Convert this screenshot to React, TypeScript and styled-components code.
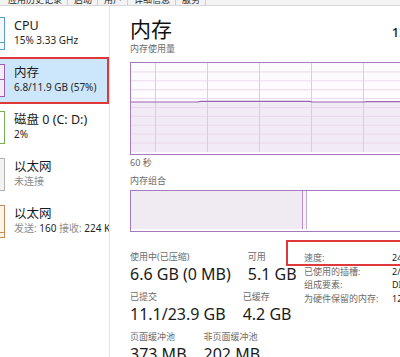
import React from "react";
import styled, { createGlobalStyle } from "styled-components";

const GlobalStyle = createGlobalStyle`
  html, body { margin: 0; padding: 0; background: #ffffff; overflow: hidden; }
  body { font-family: "Noto Sans", "Noto Sans CJK SC", sans-serif; color: #1b1b1b; }
  #root { width: 400px; height: 357px; }
`;

const Window = styled.div`
  width: 400px;
  height: 357px;
  overflow: hidden;
  display: flex;
  flex-direction: column;
  background: #ffffff;
`;

const TabStrip = styled.div`
  height: 5px;
  flex: none;
  display: flex;
  align-items: flex-end;
  overflow: hidden;
  background: #f3f3f3;
  border-bottom: 1px solid #d8d8d8;
  padding-left: 8px;
`;

const Tab = styled.div`
  font-family: "Noto Sans CJK SC", sans-serif;
  font-size: 9px;
  line-height: 10px;
  color: #262626;
  padding-right: 5px;
  margin-right: 6px;
  border-right: 1px solid #cfcfcf;
  white-space: nowrap;
`;

const Body = styled.div`
  flex: 1;
  display: flex;
  min-height: 0;
`;

const Sidebar = styled.nav`
  flex: none;
  width: 109px;
  border-right: 1px solid #e4e4e4;
  padding-top: 4px;
  display: flex;
  flex-direction: column;
  overflow: hidden;
`;

const Item = styled.div<{ $selected?: boolean }>`
  position: relative;
  height: 47px;
  flex: none;
  display: flex;
  gap: 9px;
  background: ${(p) => (p.$selected ? "#cce7fb" : "transparent")};
`;

const Annotation = styled.span<{ $top: number; $left: number; $right: number; $bottom: number }>`
  position: absolute;
  top: ${(p) => p.$top}px;
  left: ${(p) => p.$left}px;
  right: ${(p) => p.$right}px;
  bottom: ${(p) => p.$bottom}px;
  border: 2px solid #e0383a;
  pointer-events: none;
`;

const Thumb = styled.div<{ $color: string; $bg: string }>`
  flex: none;
  width: 4px;
  height: 31px;
  margin-top: 7px;
  border: 1px solid ${(p) => p.$color};
  border-left: none;
  background: ${(p) => p.$bg};
  display: flex;
  flex-direction: column;
  justify-content: flex-end;
`;

const ThumbFill = styled.div<{ $color: string }>`
  border-top: 1px solid ${(p) => p.$color};
`;

const ItemText = styled.div`
  padding-top: 8px;
  min-width: 0;
  white-space: nowrap;
`;

const ItemTitle = styled.div`
  font-size: 12.5px;
  line-height: 15px;
  color: #1a1a1a;
`;

const ItemSub = styled.div`
  font-size: 10px;
  line-height: 14px;
  color: #262626;
`;

const Muted = styled.span`
  color: #8c8c8c;
`;

const Main = styled.main`
  flex: none;
  width: 309px;
  padding: 11px 0 0 20px;
  display: flex;
  flex-direction: column;
`;

const Header = styled.div`
  display: flex;
  justify-content: space-between;
  align-items: baseline;
  height: 24px;
`;

const Title = styled.h1`
  margin: 0;
  font-size: 21px;
  line-height: 24px;
  font-weight: 400;
  color: #111111;
`;

const Total = styled.div`
  font-size: 13px;
  font-weight: 500;
  color: #1a1a1a;
`;

const ChartLabel = styled.div<{ $mt: number }>`
  margin-top: ${(p) => p.$mt}px;
  font-size: 9px;
  line-height: 12px;
  color: #6a6a6a;
`;

const Chart = styled.div<{ $h: number; $mt: number }>`
  flex: none;
  margin-top: ${(p) => p.$mt}px;
  height: ${(p) => p.$h}px;
  border: 1px solid #a67bbd;
  background: #fdfbfd;
  svg { display: block; }
`;

const Stats = styled.div`
  display: flex;
  margin-top: 19px;
`;

const StatsLeft = styled.div`
  flex: none;
  width: 174px;
  display: flex;
  flex-direction: column;
  gap: 6px;
`;

const StatRow = styled.div`
  display: flex;
  gap: 17px;
`;

const Stat = styled.div`
  display: flex;
  flex-direction: column;
`;

const StatLabel = styled.div`
  font-size: 9px;
  line-height: 12px;
  color: #6b6b6b;
  white-space: nowrap;
`;

const StatValue = styled.div`
  font-size: 16px;
  line-height: 22px;
  color: #1b1b1b;
  white-space: nowrap;
`;

const Details = styled.div`
  display: flex;
  flex-direction: column;
`;

const DetailRow = styled.div`
  position: relative;
  display: flex;
  font-size: 9px;
  line-height: 13.5px;
  white-space: nowrap;
`;

const DetailLabel = styled.span`
  width: 88px;
  flex: none;
  color: #6b6b6b;
`;

const DetailValue = styled.span`
  color: #1b1b1b;
`;

const CW = 307;

function UsageGraph() {
  const h = 89;
  const line = "M0 39 L66 39 L70 38.4 L178 38.4 L182 39 L232 39 L236 38.6 L307 38.6";
  const rows = Array.from({ length: 9 }, (_, i) => (i + 1) * 8.9);
  const cols = Array.from({ length: 6 }, (_, i) => 24 + i * 52);
  return (
    <svg width={CW} height={h} viewBox={`0 0 ${CW} ${h}`}>
      <path d={`${line} L307 ${h} L0 ${h} Z`} fill="#f2eaf4" />
      {rows.map((y) => (
        <line key={`r${y}`} x1={0} x2={CW} y1={y} y2={y} stroke="#ead9ee" strokeWidth={1} />
      ))}
      {cols.map((x) => (
        <line key={`c${x}`} x1={x + 0.5} x2={x + 0.5} y1={0} y2={h} stroke="#dccbe2" strokeWidth={1} />
      ))}
      <path d={line} fill="none" stroke="#9b63b4" strokeWidth={1.2} />
    </svg>
  );
}

function CompositionGraph() {
  const h = 38;
  return (
    <svg width={CW} height={h} viewBox={`0 0 ${CW} ${h}`}>
      <rect x={0} y={0} width={171} height={h} fill="#f0ebf2" />
      <rect x={172} y={0} width={3} height={h} fill="#f6f1f8" />
      <line x1={171.5} x2={171.5} y1={0} y2={h} stroke="#b090c2" />
      <line x1={175.5} x2={175.5} y1={0} y2={h} stroke="#c6acd3" />
      <rect x={176} y={0} width={CW - 176} height={h} fill="#ffffff" />
    </svg>
  );
}

type SubPart = { t: string; muted?: boolean };
type Perf = {
  title: string;
  sub: SubPart[];
  color: string;
  bg: string;
  level?: number;
  selected?: boolean;
};

const perfItems: Perf[] = [
  { title: "CPU", sub: [{ t: "15% 3.33 GHz" }], color: "#5a9dc8", bg: "#f2f8fc", level: 6 },
  { title: "内存", sub: [{ t: "6.8/11.9 GB (57%)" }], color: "#9d5db8", bg: "#f3edf7", level: 16, selected: true },
  { title: "磁盘 0 (C: D:)", sub: [{ t: "2%" }], color: "#76b04f", bg: "#ffffff" },
  { title: "以太网", sub: [{ t: "未连接", muted: true }], color: "#b3b3b3", bg: "#f3f3f3" },
  {
    title: "以太网",
    sub: [
      { t: "发送: ", muted: true },
      { t: "160 " },
      { t: "接收: ", muted: true },
      { t: "224 Kbps" },
    ],
    color: "#c48b55",
    bg: "#fcf3ea",
    level: 4,
  },
];

const tabs = ["应用历史记录", "启动", "用户", "详细信息", "服务"];

const stats: { label: string; value: string }[][] = [
  [
    { label: "使用中(已压缩)", value: "6.6 GB (0 MB)" },
    { label: "可用", value: "5.1 GB" },
  ],
  [
    { label: "已提交", value: "11.1/23.9 GB" },
    { label: "已缓存", value: "4.2 GB" },
  ],
  [
    { label: "页面缓冲池", value: "373 MB" },
    { label: "非页面缓冲池", value: "202 MB" },
  ],
];

const details = [
  { label: "速度:", value: "2400 MHz", mark: true },
  { label: "已使用的插槽:", value: "2/4" },
  { label: "组成要素:", value: "DIMM" },
  { label: "为硬件保留的内存:", value: "128 MB" },
];

export default function App() {
  return (
    <>
      <GlobalStyle />
      <Window>
        <TabStrip>
          {tabs.map((t) => (
            <Tab key={t}>{t}</Tab>
          ))}
        </TabStrip>
        <Body>
          <Sidebar>
            {perfItems.map((it, i) => (
              <Item key={i} $selected={it.selected}>
                <Thumb $color={it.color} $bg={it.bg}>
                  {it.level !== undefined && (
                    <ThumbFill $color={it.color} style={{ height: it.level }} />
                  )}
                </Thumb>
                <ItemText>
                  <ItemTitle>{it.title}</ItemTitle>
                  <ItemSub>
                    {it.sub.map((s, j) =>
                      s.muted ? <Muted key={j}>{s.t}</Muted> : <span key={j}>{s.t}</span>
                    )}
                  </ItemSub>
                </ItemText>
                {it.selected && <Annotation $top={0} $left={-4} $right={0} $bottom={0} />}
              </Item>
            ))}
          </Sidebar>
          <Main>
            <Header>
              <Title>内存</Title>
              <Total>12.0 GB</Total>
            </Header>
            <ChartLabel $mt={2}>内存使用量</ChartLabel>
            <Chart $h={91} $mt={7}>
              <UsageGraph />
            </Chart>
            <ChartLabel $mt={2}>60 秒</ChartLabel>
            <ChartLabel $mt={6}>内存组合</ChartLabel>
            <Chart $h={40} $mt={3}>
              <CompositionGraph />
            </Chart>
            <Stats>
              <StatsLeft>
                {stats.map((row, i) => (
                  <StatRow key={i}>
                    {row.map((s) => (
                      <Stat key={s.label}>
                        <StatLabel>{s.label}</StatLabel>
                        <StatValue>{s.value}</StatValue>
                      </Stat>
                    ))}
                  </StatRow>
                ))}
              </StatsLeft>
              <Details>
                {details.map((d) => (
                  <DetailRow key={d.label}>
                    <DetailLabel>{d.label}</DetailLabel>
                    <DetailValue>{d.value}</DetailValue>
                    {d.mark && <Annotation $top={-11} $left={-18} $right={-120} $bottom={-1} />}
                  </DetailRow>
                ))}
              </Details>
            </Stats>
          </Main>
        </Body>
      </Window>
    </>
  );
}
